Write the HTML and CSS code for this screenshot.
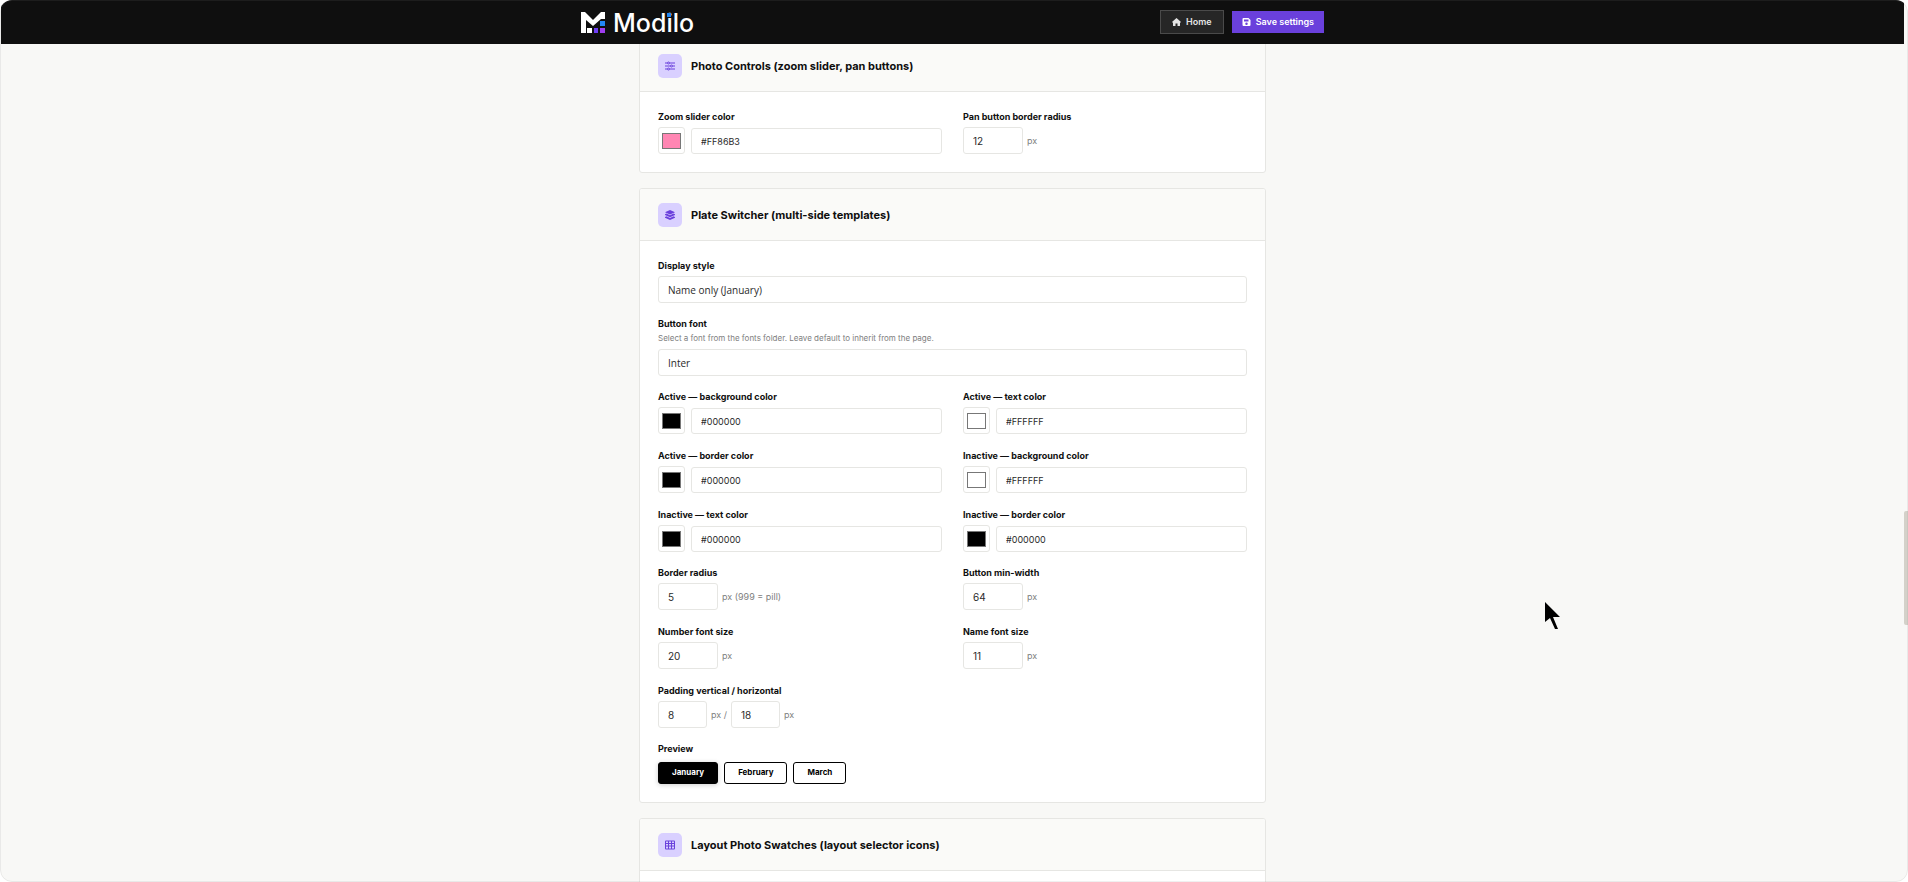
FILE: index.html
```html
<!DOCTYPE html>
<html lang="en">
<head>
    <meta charset="UTF-8">
    <meta name="viewport" content="width=device-width, initial-scale=1">
    <title>Modilo - Settings</title>
    <link rel="stylesheet" href="styles.css">
</head>
<body>
<div class="window">

    <header class="topbar">
        <div class="topbar-inner">
            <a class="logo" href="#">
                <svg class="logo-mark" viewBox="0 0 24 21" aria-hidden="true">
                    <path fill="#fff" d="M0 0h4l8 8 8-8h4v7h-4l-8 7-7-6v13H0z"/>
                    <rect fill="#fff" x="6" y="16" width="5" height="5"/>
                    <rect fill="#6d3df5" x="13" y="16" width="4" height="5"/>
                    <rect fill="#a03df0" x="19" y="16" width="5" height="5"/>
                    <rect fill="#2186f3" x="19" y="9" width="5" height="5"/>
                </svg>
                <span class="logo-text">Mod<span class="logo-i">i</span>lo</span>
            </a>
            <nav class="topbar-actions">
                <a class="btn btn-dark" href="#">
                    <svg class="btn-icon" viewBox="0 0 18 16" aria-hidden="true"><path fill="currentColor" d="M9 0l9 8-1.200 1.300L16 8.600V15a1 1 0 0 1-1 1h-4v-5H7v5H3a1 1 0 0 1-1-1V8.600l-.8.7L0 8z"/></svg>
                    Home
                </a>
                <button class="btn btn-primary" type="submit" form="settings">
                    <svg class="btn-icon" viewBox="0 0 16 16" aria-hidden="true"><path fill="currentColor" fill-rule="evenodd" d="M2 0h10l4 4v10a2 2 0 0 1-2 2H2a2 2 0 0 1-2-2V2a2 2 0 0 1 2-2zm1 3v4h9V3zm5 6a2.500 2.500 0 1 0 0 5 2.500 2.500 0 0 0 0-5z"/></svg>
                    Save settings
                </button>
            </nav>
        </div>
    </header>

    <main class="content">
        <form id="settings" class="cards">

            <!-- Photo controls -->
            <section class="card">
                <div class="card-head">
                    <span class="card-icon">
                        <svg viewBox="0 0 20 18" fill="none" stroke="currentColor" stroke-width="2" aria-hidden="true"><path d="M0 3h5M9 3h11M0 9h11M15 9h5M0 15h5M9 15h11"/><circle cx="7" cy="3" r="2"/><circle cx="13" cy="9" r="2"/><circle cx="7" cy="15" r="2"/></svg>
                    </span>
                    <h2>Photo Controls (zoom slider, pan buttons)</h2>
                </div>
                <div class="card-body">
                    <div class="grid">
                        <div class="field">
                            <label for="zoom-color">Zoom slider color</label>
                            <div class="row row-color"><input type="color" value="#ff86b3" aria-label="Pick zoom slider color"><input class="hex" id="zoom-color" type="text" value="#FF86B3"></div>
                        </div>
                        <div class="field">
                            <label for="pan-radius">Pan button border radius</label>
                            <div class="row"><input class="num" id="pan-radius" type="number" value="12"><span class="unit">px</span></div>
                        </div>
                    </div>
                </div>
            </section>

            <!-- Plate switcher -->
            <section class="card">
                <div class="card-head">
                    <span class="card-icon">
                        <svg viewBox="0 0 20 20" fill="currentColor" aria-hidden="true"><path d="M10 0l10 4.500L10 9 0 4.500z"/><path d="M0 8.500l3-1.300 7 3.200 7-3.200 3 1.300v1.500l-10 4.500L0 10z"/><path d="M0 14l3-1.300 7 3.200 7-3.200 3 1.300v1.500L10 20 0 15.500z"/></svg>
                    </span>
                    <h2>Plate Switcher (multi-side templates)</h2>
                </div>
                <div class="card-body">
                    <div class="field">
                        <label for="display-style">Display style</label>
                        <select id="display-style"><option>Name only (January)</option></select>
                    </div>
                    <div class="field">
                        <label for="button-font">Button font</label>
                        <p class="hint">Select a font from the fonts folder. Leave default to inherit from the page.</p>
                        <select id="button-font"><option>Inter</option></select>
                    </div>
                    <div class="grid">
                        <div class="field">
                            <label for="active-bg">Active — background color</label>
                            <div class="row row-color"><input type="color" value="#000000" aria-label="Pick active background color"><input class="hex" id="active-bg" type="text" value="#000000"></div>
                        </div>
                        <div class="field">
                            <label for="active-text">Active — text color</label>
                            <div class="row row-color"><input type="color" value="#ffffff" aria-label="Pick active text color"><input class="hex" id="active-text" type="text" value="#FFFFFF"></div>
                        </div>
                        <div class="field">
                            <label for="active-border">Active — border color</label>
                            <div class="row row-color"><input type="color" value="#000000" aria-label="Pick active border color"><input class="hex" id="active-border" type="text" value="#000000"></div>
                        </div>
                        <div class="field">
                            <label for="inactive-bg">Inactive — background color</label>
                            <div class="row row-color"><input type="color" value="#ffffff" aria-label="Pick inactive background color"><input class="hex" id="inactive-bg" type="text" value="#FFFFFF"></div>
                        </div>
                        <div class="field">
                            <label for="inactive-text">Inactive — text color</label>
                            <div class="row row-color"><input type="color" value="#000000" aria-label="Pick inactive text color"><input class="hex" id="inactive-text" type="text" value="#000000"></div>
                        </div>
                        <div class="field">
                            <label for="inactive-border">Inactive — border color</label>
                            <div class="row row-color"><input type="color" value="#000000" aria-label="Pick inactive border color"><input class="hex" id="inactive-border" type="text" value="#000000"></div>
                        </div>
                    </div>
                    <div class="grid">
                        <div class="field">
                            <label for="border-radius">Border radius</label>
                            <div class="row"><input class="num" id="border-radius" type="number" value="5"><span class="unit">px (999 = pill)</span></div>
                        </div>
                        <div class="field">
                            <label for="min-width">Button min-width</label>
                            <div class="row"><input class="num" id="min-width" type="number" value="64"><span class="unit">px</span></div>
                        </div>
                        <div class="field">
                            <label for="number-size">Number font size</label>
                            <div class="row"><input class="num" id="number-size" type="number" value="20"><span class="unit">px</span></div>
                        </div>
                        <div class="field">
                            <label for="name-size">Name font size</label>
                            <div class="row"><input class="num" id="name-size" type="number" value="11"><span class="unit">px</span></div>
                        </div>
                        <div class="field">
                            <label for="pad-v">Padding vertical / horizontal</label>
                            <div class="row"><input class="num num-small" id="pad-v" type="number" value="8"><span class="unit">px /</span><input class="num num-small" type="number" value="18" aria-label="Padding horizontal"><span class="unit">px</span></div>
                        </div>
                    </div>
                    <div class="field">
                        <span class="label">Preview</span>
                        <div class="preview">
                            <button class="plate plate-active" type="button">January</button>
                            <button class="plate" type="button">February</button>
                            <button class="plate" type="button">March</button>
                        </div>
                    </div>
                </div>
            </section>

            <!-- Layout swatches -->
            <section class="card">
                <div class="card-head">
                    <span class="card-icon">
                        <svg viewBox="0 0 20 18" aria-hidden="true"><path fill="currentColor" fill-rule="evenodd" d="M2 0h16a2 2 0 0 1 2 2v14a2 2 0 0 1-2 2H2a2 2 0 0 1-2-2V2a2 2 0 0 1 2-2zm0 2v3h4V2zm6 0v3h4V2zm6 0v3h4V2zM2 7v3h4V7zm6 0v3h4V7zm6 0v3h4V7zM2 12v4h4v-4zm6 0v4h4v-4zm6 0v4h4v-4z"/></svg>
                    </span>
                    <h2>Layout Photo Swatches (layout selector icons)</h2>
                </div>
                <div class="card-body"></div>
            </section>

        </form>
    </main>

    <div class="scroll-thumb"></div>
    <svg class="pointer" viewBox="0 0 15 27" aria-hidden="true"><path d="M0 0v20l5-4 5 11h3L8 15h7z"/></svg>
</div>
</body>
</html>
```
FILE: styles.css
```css
* {
    box-sizing: border-box;
}
body {
    margin: 0;
    background: #fff;
    color: #0f0f0f;
    font-family: Inter, "Liberation Sans", sans-serif;
    font-size: 9px;
}
.window {
    position: relative;
    height: 100vh;
    overflow: hidden;
    padding: 0 4px 0 1px;
    background: #f8f8f6;
    border-radius: 12px;
}
/* hairline round the window */
.window::after {
    content: "";
    position: absolute;
    inset: 0;
    z-index: 5;
    border: 1px solid rgba(128, 128, 128, 0.12);
    border-radius: 12px;
    pointer-events: none;
}

/* Top bar */
.topbar {
    position: relative;
    z-index: 2;
    height: 44px;
    background: #0f0f0f;
}
.topbar-inner {
    display: flex;
    align-items: center;
    justify-content: space-between;
    max-width: 743px;
    height: 100%;
    margin: 0 auto;
}
.logo {
    display: flex;
    align-items: center;
    gap: 8px;
    color: #fff;
    text-decoration: none;
}
.logo-mark {
    width: 24px;
    height: 21px;
}
.logo-text {
    padding-top: 2px;
    font-size: 25px;
    line-height: 28px;
    font-weight: 500;
}
.logo-i {
    position: relative;
}
.logo-i::after {
    content: "";
    position: absolute;
    top: 5px;
    left: 1px;
    width: 4px;
    height: 4px;
    background: #2186f3;
}
.topbar-actions {
    display: flex;
    align-items: center;
    gap: 8px;
}
.btn {
    display: flex;
    align-items: center;
    gap: 5px;
    height: 22px;
    padding: 0 10px;
    border: 0;
    font: 600 9px/12px Inter, "Liberation Sans", sans-serif;
    text-decoration: none;
}
.btn-icon {
    width: 9px;
    height: 8px;
}
.btn-dark {
    height: 24px;
    padding: 0 11px;
    border: 1px solid #4a4a4a;
    background: #262626;
    color: #e4e4e4;
}
.btn-primary {
    background: #6a40dc;
    color: #fff;
}

/* Cards */
.content {
    max-width: 627px;
    margin: -5px auto 0;
}
.cards {
    display: flex;
    flex-direction: column;
    gap: 15px;
}
.card {
    overflow: hidden;
    background: #fff;
    border: 1px solid #e6e6e3;
    border-radius: 3px;
}
.card-head {
    display: flex;
    align-items: center;
    gap: 9px;
    padding: 14px 18px 13px;
    background: #fafaf8;
    border-bottom: 1px solid #e6e6e3;
}
.card-head h2 {
    margin: 0;
    font-size: 11px;
    line-height: 14px;
    font-weight: 700;
}
.card-icon {
    display: flex;
    align-items: center;
    justify-content: center;
    width: 24px;
    height: 24px;
    border-radius: 5px;
    background: #d9d0ff;
    color: #6a40dc;
}
.card-icon svg {
    width: 10px;
    height: 10px;
}
.card-body {
    display: flex;
    flex-direction: column;
    gap: 14px;
    padding: 18px;
}
.grid {
    display: grid;
    grid-template-columns: 1fr 1fr;
    gap: 15px 21px;
}

/* Fields */
.field label,
.label {
    display: block;
    height: 17px;
    font-size: 9px;
    line-height: 14px;
    font-weight: 700;
}
.hint {
    height: 15px;
    margin: 0;
    color: #808080;
    font-size: 8px;
    line-height: 9px;
}
.row {
    display: flex;
    align-items: center;
}
.row-color {
    gap: 6px;
    align-items: flex-end;
}
select,
.hex,
.num {
    margin: 0;
    padding: 0 9px;
    border: 1px solid #e6e6e3;
    border-radius: 3px;
    background: #fff;
    color: #2a2a2a;
    font: 10px Inter, "Liberation Sans", sans-serif;
}
select {
    display: block;
    appearance: none;
    width: 100%;
    height: 27px;
    font-family: "Open Sans", "Liberation Sans", sans-serif;
}
.hex {
    flex: 1;
    min-width: 0;
    height: 26px;
    font-size: 9px;
}
.num {
    appearance: textfield;
    width: 60px;
    height: 27px;
}
.num-small {
    width: 49px;
}
.num::-webkit-inner-spin-button {
    appearance: none;
    margin: 0;
}
.unit {
    margin: 0 4px;
    color: #808080;
    font-size: 9px;
}
input[type="color"] {
    appearance: none;
    width: 27px;
    height: 27px;
    padding: 5px 3px 4px;
    border: 1px solid #e6e6e3;
    border-radius: 3px;
    background: #fff;
}
input[type="color"]::-webkit-color-swatch-wrapper {
    padding: 0;
}
input[type="color"]::-webkit-color-swatch {
    border: 1px solid #777;
    border-radius: 0;
}

/* Preview buttons */
.preview {
    display: flex;
    gap: 6px;
    padding-top: 3px;
}
.plate {
    height: 22px;
    padding: 0 13px 2px;
    border: 1px solid #000;
    border-radius: 3px;
    background: #fff;
    color: #000;
    font: 700 8px/10px Inter, "Liberation Sans", sans-serif;
}
.plate-active {
    background: #000;
    color: #fff;
    box-shadow: 0 1px 5px rgba(0, 0, 0, 0.2);
}

.scroll-thumb {
    position: absolute;
    top: 511px;
    right: 0;
    width: 4px;
    height: 114px;
    border-radius: 2px 0 0 2px;
    background: #d4d1c9;
}
.pointer {
    position: absolute;
    top: 602px;
    left: 1545px;
    width: 15px;
    height: 27px;
}
```
